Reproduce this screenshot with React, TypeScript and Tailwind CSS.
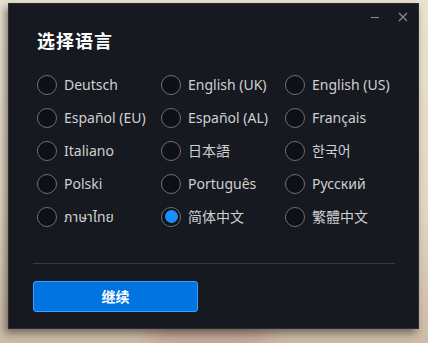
const languages = [
  "Deutsch",
  "English (UK)",
  "English (US)",
  "Español (EU)",
  "Español (AL)",
  "Français",
  "Italiano",
  "日本語",
  "한국어",
  "Polski",
  "Português",
  "Русский",
  "ภาษาไทย",
  "简体中文",
  "繁體中文",
];

const font = "font-['Noto_Sans','Noto_Sans_CJK_SC','Noto_Sans_Thai',sans-serif]";

function Radio({ label, checked }: { label: string; checked: boolean }) {
  return (
    <label className="flex h-[33px] items-center gap-[7px]">
      <span className="flex h-[20px] w-[20px] items-center justify-center rounded-full border-[1.5px] border-[#6e7075] bg-[#0e1015]">
        {checked && <span className="h-[13px] w-[13px] rounded-full bg-[#1a8fff]" />}
      </span>
      <span className="text-[14px] leading-none text-[#cfd0d2]">{label}</span>
    </label>
  );
}

export default function App() {
  return (
    <div className={`relative h-[343px] w-[428px] overflow-hidden bg-[linear-gradient(180deg,#e9e2ce_0%,#e2d8c2_60%,#cdb9a6_100%)] ${font}`}>
      <div className="absolute bottom-0 left-[150px] h-[30px] w-[120px] rounded-full bg-[#b08a80] opacity-60 blur-md" />
      <div className="relative ml-[8px] mt-[3px] flex h-[326px] w-[411px] flex-col border border-[#2a2d33] bg-[#161920] shadow-[-3px_4px_8px_rgba(0,0,0,0.45)]">
        <div className="flex h-[24px] items-center justify-end gap-[18px] pr-[10px] pt-[2px] text-[#8a8c90]">
          <svg width="10" height="10" viewBox="0 0 10 10"><path d="M1 5.5h8" stroke="currentColor" strokeWidth="1" /></svg>
          <svg width="10" height="10" viewBox="0 0 10 10"><path d="M1 1l8 8M9 1l-8 8" stroke="currentColor" strokeWidth="1.2" /></svg>
        </div>
        <div className="pl-[28px]">
          <h1 className="mt-[1px] text-[18px] font-bold leading-[24px] tracking-[1px] text-white">选择语言</h1>
          <div className="mt-[15px] grid w-[372px] grid-cols-[124px_124px_124px]">
            {languages.map((l) => (
              <Radio key={l} label={l} checked={l === "简体中文"} />
            ))}
          </div>
          <div className="-ml-[4px] mt-[30px] h-px w-[362px] bg-[#393b40]" />
          <button className="-ml-[4px] mt-[17px] flex h-[31px] w-[165px] items-center justify-center rounded-[3px] border-[1.5px] border-[#3aa0ff] bg-[#0274e2] text-[14px] font-bold text-white">
            继续
          </button>
        </div>
      </div>
    </div>
  );
}
